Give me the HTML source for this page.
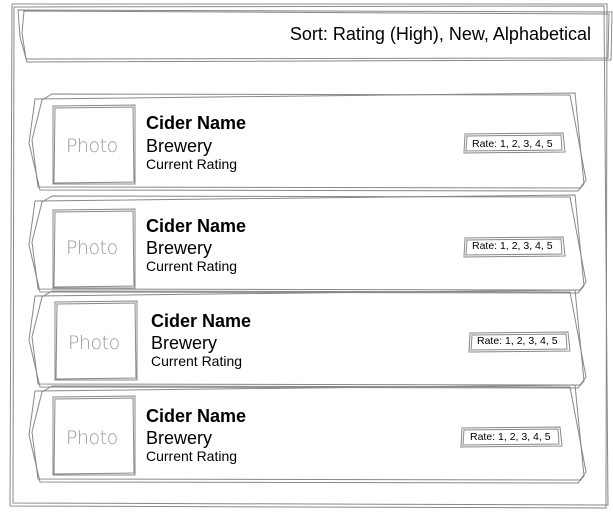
<!DOCTYPE html>
<html><head><style>
body{margin:0;width:613px;height:513px;background:#fff;position:relative;overflow:hidden;font-family:"Liberation Sans",sans-serif}
svg{position:absolute;left:0;top:0}
.t{position:absolute;color:#000;white-space:nowrap}
.n{font-weight:bold;font-size:18px}
.b{font-size:18px}
.c{font-size:14px}
.r{font-size:10.5px}
.p{position:absolute;color:#999;font-size:19px;font-family:"DejaVu Sans",sans-serif;font-weight:200;letter-spacing:-0.5px}
</style></head><body>
<svg width="613" height="513" fill="none" stroke="#888" stroke-width="1">
<path d="M12 4 L607 4 L606 508 L10 506 Z"/>
<path d="M14 7 L604 6 L608 505 L13 503 Z"/>
<path d="M18 10 L612 12 L611 60 L27 62 L20 37 Z"/>
<path d="M24 11 L609 14 L608 58 L26 59 L22 33 Z"/>
<g id="c">
<path d="M35 99 L575 93 L584 184 L578 191 L40 190 L29 143 Z"/>
<path d="M52 94 L570 95 L586 180 L580 188 L38 187 L32 140 L42 100 Z"/>
</g>
<use href="#c" y="102"/>
<use href="#c" y="197"/>
<use href="#c" y="292"/>
<g id="ph">
<path d="M53 106 L135 105 L135 184 L53 184 Z"/>
<path d="M55 108 L133 107 L134 182 L54 183 Z"/>
</g>
<use href="#ph" y="104"/>
<use href="#ph" x="2" y="196"/>
<use href="#ph" y="291"/>
<g id="rb">
<path d="M465 134 L563 133 L565 152 L464 153 Z"/>
<path d="M467 136 L561 135 L562 150 L466 151 Z"/>
</g>
<use href="#rb" y="104"/>
<use href="#rb" x="5" y="199"/>
<use href="#rb" x="-3" y="294"/>
</svg>
<div class="t" style="right:22px;top:24px;font-size:18px">Sort: Rating (High), New, Alphabetical</div>

<div class="p" style="left:66px;top:135px">Photo</div>
<div class="t n" style="left:146px;top:113px">Cider Name</div>
<div class="t b" style="left:146px;top:136px">Brewery</div>
<div class="t c" style="left:146px;top:156px">Current Rating</div>
<div class="t r" style="left:472px;top:138px">Rate: 1, 2, 3, 4, 5</div>

<div class="p" style="left:66px;top:237px">Photo</div>
<div class="t n" style="left:146px;top:216px">Cider Name</div>
<div class="t b" style="left:146px;top:238px">Brewery</div>
<div class="t c" style="left:146px;top:258px">Current Rating</div>
<div class="t r" style="left:472px;top:240px">Rate: 1, 2, 3, 4, 5</div>

<div class="p" style="left:68px;top:332px">Photo</div>
<div class="t n" style="left:151px;top:311px">Cider Name</div>
<div class="t b" style="left:151px;top:333px">Brewery</div>
<div class="t c" style="left:151px;top:353px">Current Rating</div>
<div class="t r" style="left:477px;top:335px">Rate: 1, 2, 3, 4, 5</div>

<div class="p" style="left:66px;top:427px">Photo</div>
<div class="t n" style="left:146px;top:406px">Cider Name</div>
<div class="t b" style="left:146px;top:428px">Brewery</div>
<div class="t c" style="left:146px;top:448px">Current Rating</div>
<div class="t r" style="left:470px;top:431px">Rate: 1, 2, 3, 4, 5</div>
</body></html>
